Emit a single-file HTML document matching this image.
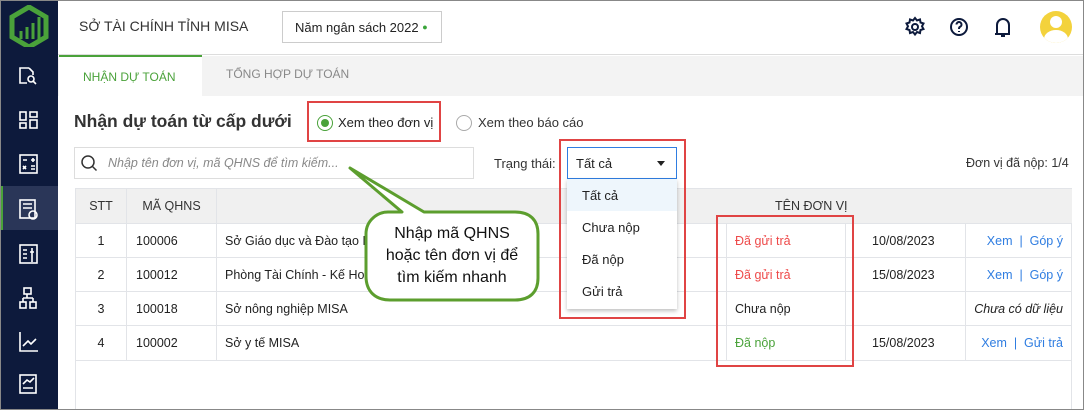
<!DOCTYPE html>
<html><head><meta charset="utf-8"><style>
*{box-sizing:border-box;margin:0;padding:0}
body{width:1084px;height:410px;overflow:hidden;font-family:"Liberation Sans",sans-serif;background:#fff;position:relative;font-size:13px;color:#222}
.a{position:absolute}
.sb{left:0;top:0;width:58px;height:410px;background:#0d1a3c}
td,th{border:1px solid #e2e4e8}
</style></head><body>
<div class="a" style="left:0;top:0;width:1084px;height:410px;border:1px solid #888;z-index:20;pointer-events:none"></div>
<div class="a sb"></div>
<svg class="a" style="left:8px;top:5px" width="42" height="42" viewBox="0 0 42 42"><polygon points="21,2 38,12 38,32 21,42 4,32 4,12" fill="none" stroke="#4aa23a" stroke-width="5"/><path d="M13,34V26M19,34V22M25,34V18M31,34V12" stroke="#4aa23a" stroke-width="3"/></svg>
<div class="a" style="left:0;top:186px;width:58px;height:44px;background:#2a3658;border-left:3px solid #4aa23a"></div>
<svg class="a" style="left:0;top:60px" width="58" height="340" fill="none" stroke="#fff" stroke-width="1.6">
<path d="M29,8H20V23H27M29,8L33,12V15"/><circle cx="31" cy="19" r="3"/><path d="M33,21L36,24"/>
<rect x="20" y="52" width="6" height="8"/><rect x="30" y="52" width="7" height="5"/><rect x="20" y="63" width="6" height="5"/><rect x="30" y="60" width="7" height="8"/>
<rect x="20" y="95" width="17" height="18"/><path d="M23,100h4M31,100h4M33,98v4M23,106l3,3M26,106l-3,3M31,106h4M31,109h4"/>
<rect x="20" y="140" width="15" height="18"/><path d="M23,144h9M23,148h9"/><circle cx="33" cy="155" r="4"/>
<rect x="20" y="185" width="17" height="18"/><path d="M23,190h4M23,194h4M23,198h4M32,188v14M30,192h4"/>
<rect x="24" y="228" width="7" height="6"/><rect x="20" y="242" width="6" height="6"/><rect x="30" y="242" width="6" height="6"/><path d="M27,234v4M23,238h10M23,238v4M33,238v4"/>
<path d="M20,272V291H38M23,286l5,-5 3,3 5,-5"/>
<rect x="20" y="315" width="16" height="18"/><path d="M23,328h10M23,324l4,-4 3,2 4,-4"/>
</svg>
<div class="a" style="left:58px;top:0;width:1026px;height:55px;border-bottom:1px solid #ddd"></div>
<div class="a" style="left:79px;top:18px;font-size:14px;color:#333">SỞ TÀI CHÍNH TỈNH MISA</div>
<div class="a" style="left:282px;top:11px;width:160px;height:32px;border:1px solid #ccc;font-size:13px;padding:8px 12px;color:#222">Năm ngân sách 2022 <span style="color:#3aa53a;font-size:9px;position:relative;top:-2px">●</span></div>
<svg class="a" style="left:903px;top:15px" width="120" height="24" fill="none" stroke="#0d1a3c" stroke-width="2">
<circle cx="12" cy="12" r="3"/><path d="M12,3l2,2.5 3,-1 .5,3 3,1-1.5,2.8 1.5,2.7-3,1-.5,3-3-1-2,2.5-2-2.5-3,1-.5-3-3-1 1.5-2.7-1.5-2.8 3-1 .5-3 3,1z"/>
<circle cx="56" cy="12" r="8"/><path d="M53.5,9.5a2.5,2.5 0 1 1 3.5,2.3c-1,.5-1,1-1,2.2M56,16v1"/>
<path d="M94,19V10a6,6 0 0 1 12,0V19H92M98,21h4"/></svg>
<div class="a" style="left:1040px;top:11px;width:32px;height:32px;border-radius:50%;background:#f3d23c;overflow:hidden"><div class="a" style="left:10px;top:5px;width:12px;height:12px;border-radius:50%;background:#fff"></div><div class="a" style="left:4px;top:19px;width:24px;height:18px;border-radius:50%;background:#fff"></div></div>
<div class="a" style="left:58px;top:56px;width:1026px;height:40px;background:#f3f3f3"></div>
<div class="a" style="left:59px;top:55px;width:143px;height:41px;background:#fff;border-top:2px solid #4aa23a;color:#4aa23a;font-size:12px;padding:13px 0 0 24px">NHẬN DỰ TOÁN</div>
<div class="a" style="left:226px;top:67px;font-size:12px;color:#888">TỔNG HỢP DỰ TOÁN</div>
<div class="a" style="left:74px;top:111px;font-size:17.5px;font-weight:bold;color:#333">Nhận dự toán từ cấp dưới</div>
<div class="a" style="left:307px;top:101px;width:134px;height:41px;border:2px solid #e04444"></div>
<div class="a" style="left:317px;top:115px;width:16px;height:16px;border-radius:50%;border:1.5px solid #4aa23a"><div class="a" style="left:2.5px;top:2.5px;width:8px;height:8px;border-radius:50%;background:#4aa23a"></div></div>
<div class="a" style="left:338px;top:115px;font-size:13px">Xem theo đơn vị</div>
<div class="a" style="left:456px;top:115px;width:16px;height:16px;border-radius:50%;border:1px solid #aaa"></div>
<div class="a" style="left:478px;top:115px;font-size:13px;color:#333">Xem theo báo cáo</div>
<div class="a" style="left:74px;top:147px;width:400px;height:32px;border:1px solid #ddd"></div>
<svg class="a" style="left:80px;top:154px" width="18" height="18" fill="none" stroke="#333" stroke-width="1.5"><circle cx="8" cy="8" r="6"/><path d="M12.5,12.5l4,4"/></svg>
<div class="a" style="left:108px;top:156px;font-size:12.5px;color:#888;font-style:italic">Nhập tên đơn vị, mã QHNS để tìm kiếm...</div>
<div class="a" style="left:494px;top:156px;font-size:13px;color:#333">Trạng thái:</div>
<div class="a" style="left:966px;top:156px;font-size:12.5px;color:#333">Đơn vị đã nộp: 1/4</div>
<table class="a" style="left:75px;top:188px;width:997px;border-collapse:collapse;font-size:12.5px">
<tr style="height:35px;background:#f0f0f0;color:#333"><th style="width:51px;font-weight:normal">STT</th><th style="width:90px;font-weight:normal">MÃ QHNS</th><th style="font-weight:normal;border-right:none;text-align:left;padding-left:558px" colspan="4">TÊN ĐƠN VỊ</th></tr>
<tr style="height:34px"><td align="center">1</td><td style="padding-left:9px">100006</td><td style="padding-left:8px;width:510px">Sở Giáo dục và Đào tạo MISA</td><td style="width:119px;padding-left:8px;color:#ee4a4a">Đã gửi trả</td><td style="width:120px;padding-left:26px;border-right:1px solid #e2e4e8">10/08/2023</td><td style="text-align:right;padding-right:8px;color:#2f7de1">Xem &nbsp;| &nbsp;Góp ý</td></tr>
<tr style="height:34px"><td align="center">2</td><td style="padding-left:9px">100012</td><td style="padding-left:8px">Phòng Tài Chính - Kế Hoạch</td><td style="padding-left:8px;color:#ee4a4a">Đã gửi trả</td><td style="padding-left:26px">15/08/2023</td><td style="text-align:right;padding-right:8px;color:#2f7de1">Xem &nbsp;| &nbsp;Góp ý</td></tr>
<tr style="height:34px"><td align="center">3</td><td style="padding-left:9px">100018</td><td style="padding-left:8px">Sở nông nghiệp MISA</td><td style="padding-left:8px">Chưa nộp</td><td></td><td style="text-align:right;padding-right:8px;font-style:italic">Chưa có dữ liệu</td></tr>
<tr style="height:35px"><td align="center">4</td><td style="padding-left:9px">100002</td><td style="padding-left:8px">Sở y tế MISA</td><td style="padding-left:8px;color:#4aa23a">Đã nộp</td><td style="padding-left:26px">15/08/2023</td><td style="text-align:right;padding-right:8px;color:#2f7de1">Xem &nbsp;| &nbsp;Gửi trả</td></tr>
</table>
<div class="a" style="left:75px;top:360px;width:997px;height:50px;border-left:1px solid #e2e4e8;border-right:1px solid #e2e4e8"></div>
<div class="a" style="left:716px;top:215px;width:138px;height:152px;border:2px solid #e04444"></div>
<div class="a" style="left:559px;top:139px;width:127px;height:180px;border:2px solid #e04444;background:transparent;z-index:3"></div>
<div class="a" style="left:567px;top:147px;width:110px;height:32px;border:1px solid #2f7de1;padding:8px 8px;font-size:13px;background:#fff;z-index:2">Tất cả<span class="a" style="left:89px;top:13px;border:4.5px solid transparent;border-top:5px solid #222"></span></div>
<div class="a" style="left:567px;top:179px;width:110px;height:130px;background:#fff;box-shadow:0 2px 4px rgba(0,0,0,.25);font-size:13px;z-index:2">
<div style="height:32px;background:#eef6fc;padding:9px 15px">Tất cả</div><div style="height:32px;padding:9px 15px">Chưa nộp</div><div style="height:32px;padding:9px 15px">Đã nộp</div><div style="height:32px;padding:9px 15px">Gửi trả</div></div>
<svg class="a" style="left:340px;top:160px;z-index:4" width="215" height="150"><path d="M48,52 C38,52 26,60 26,74 V116 C26,132 36,140 50,140 H175 C190,140 198,132 198,118 V74 C198,60 190,52 175,52 H84 L10,8 L62,52 Z" fill="#fff" stroke="#5c9e2e" stroke-width="3" stroke-linejoin="round"/>
<text x="112" y="78" font-family="Liberation Sans" font-size="16" text-anchor="middle" fill="#111">Nhập mã QHNS</text>
<text x="112" y="100" font-family="Liberation Sans" font-size="16" text-anchor="middle" fill="#111">hoặc tên đơn vị để</text>
<text x="112" y="122" font-family="Liberation Sans" font-size="16" text-anchor="middle" fill="#111">tìm kiếm nhanh</text></svg>
</body></html>
